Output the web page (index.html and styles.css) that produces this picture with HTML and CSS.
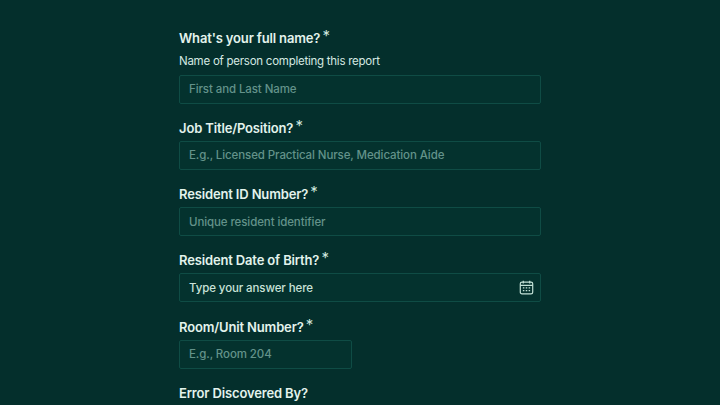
FILE: index.html
```html
<!DOCTYPE html>
<html>
<head>
    <title>Error Report</title>
    <link rel="stylesheet" href="styles.css">
</head>
<body>
    <form class="form">
        <div class="field">
            <label class="label">What's your full name? <span class="req">*</span></label>
            <p class="hint">Name of person completing this report</p>
            <input class="input" type="text" placeholder="First and Last Name">
        </div>
        <div class="field">
            <label class="label">Job Title/Position? <span class="req">*</span></label>
            <input class="input" type="text" placeholder="E.g., Licensed Practical Nurse, Medication Aide">
        </div>
        <div class="field">
            <label class="label">Resident ID Number? <span class="req">*</span></label>
            <input class="input" type="text" placeholder="Unique resident identifier">
        </div>
        <div class="field">
            <label class="label">Resident Date of Birth? <span class="req">*</span></label>
            <div class="input date">
                <span>Type your answer here</span>
                <svg class="cal" width="15" height="15" viewBox="0 0 14 14" fill="none" stroke="#c4e2d8" stroke-width="1.1">
                    <rect x="1.2" y="2" width="11.6" height="11" rx="1.6"/>
                    <path d="M1.2 5h11.6M4 .6v2.6M10 .6v2.6"/>
                    <path d="M3.6 7.3h1.4M6.3 7.3h1.4M9 7.3h1.4M3.6 9.9h1.4M6.3 9.9h1.4M9 9.9h1.4"/>
                </svg>
            </div>
        </div>
        <div class="field">
            <label class="label">Room/Unit Number? <span class="req">*</span></label>
            <input class="input short" type="text" placeholder="E.g., Room 204">
        </div>
        <div class="field">
            <label class="label">Error Discovered By?</label>
        </div>
    </form>
</body>
</html>
```

FILE: styles.css
```css
html, body {
    margin: 0;
    height: 405px;
    overflow: hidden;
}
body {
    background-color: #042f2c;
    font-family: 'Inter', sans-serif;
    color: #e3f3ec;
}
.form {
    width: 362px;
    margin-left: 179px;
    padding-top: 28.5px;
}
.field {
    margin-bottom: 15.25px;
}
.label {
    display: block;
    font-size: 13px;
    font-weight: 600;
    line-height: 19px;
    margin-bottom: 3px;
    letter-spacing: -0.15px;
}
.req {
    font-size: 15px;
    font-weight: 400;
    line-height: 1;
    position: relative;
    top: -2px;
    margin-left: -1px;
    color: #cfe6de;
}
.hint {
    margin: 5px 0 5px;
    font-size: 11.5px;
    line-height: 17px;
    letter-spacing: -0.25px;
    color: #d5e9e2;
}
.input {
    display: block;
    box-sizing: border-box;
    width: 100%;
    height: 29px;
    padding: 0 9px;
    background-color: #04322e;
    border: 1px solid #0f4c45;
    border-radius: 2px;
    color: #c9e2d9;
    font-family: 'Inter', sans-serif;
    font-size: 11.5px;
    font-weight: 500;
    letter-spacing: -0.1px;
    outline: none;
}
.input::placeholder {
    color: #63928a;
    opacity: 1;
}
.date {
    display: flex;
    align-items: center;
    justify-content: space-between;
    padding-right: 6px;
}
.short {
    width: 173px;
}
```
